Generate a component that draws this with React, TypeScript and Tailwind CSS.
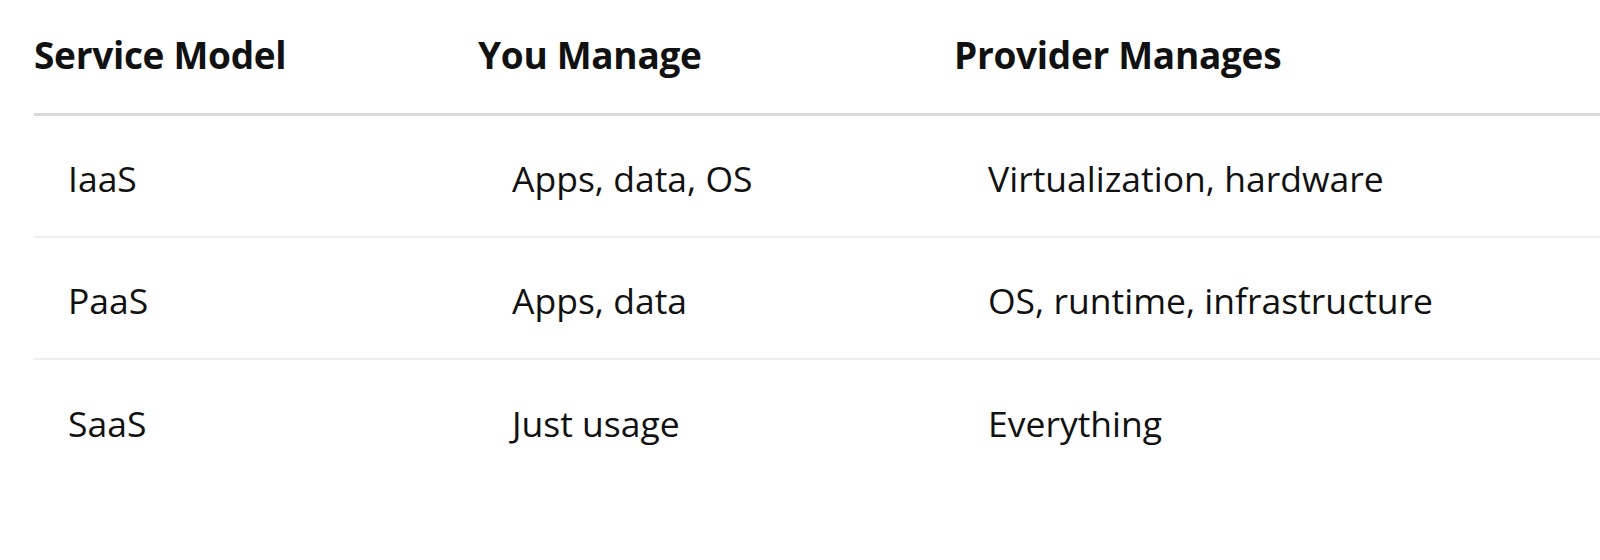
const rows = [
  ["IaaS", "Apps, data, OS", "Virtualization, hardware"],
  ["PaaS", "Apps, data", "OS, runtime, infrastructure"],
  ["SaaS", "Just usage", "Everything"],
];

export default function App() {
  return (
    <main className="h-[560px] w-full overflow-hidden bg-white pl-[34px] font-['Open_Sans',sans-serif] text-[#111]">
      <div className="grid h-[116px] grid-cols-[444px_476px_1fr] items-center border-b-[3px] border-[#dadada] pb-[3px] text-[37px] font-bold tracking-[-0.3px]">
        <div>Service Model</div>
        <div>You Manage</div>
        <div>Provider Manages</div>
      </div>
      {rows.map((r, i) => (
        <div
          key={r[0]}
          className={
            i < rows.length - 1
              ? "grid h-[122px] grid-cols-[444px_476px_1fr] items-center border-b-[2px] border-[#efefef] pt-[6px] text-[35.5px]"
              : "grid h-[122px] grid-cols-[444px_476px_1fr] items-center pt-[6px] text-[35.5px]"
          }
        >
          {r.map((c) => (
            <div key={c} className="pl-[34px]">
              {c}
            </div>
          ))}
        </div>
      ))}
    </main>
  );
}
